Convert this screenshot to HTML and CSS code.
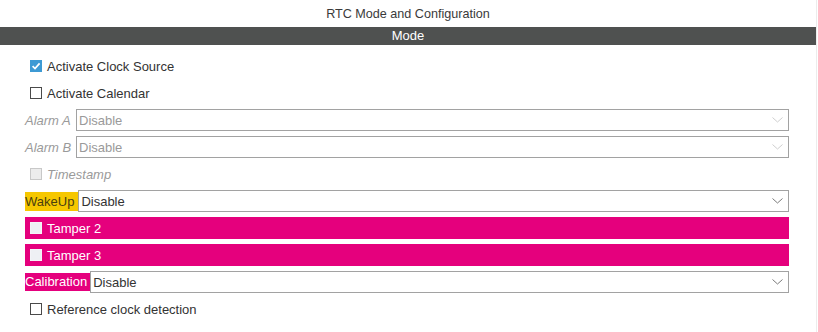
FILE: index.html
```html
<!DOCTYPE html>
<html lang="en">
<head>
    <meta charset="UTF-8">
    <title>RTC Mode and Configuration</title>
    <link rel="stylesheet" href="styles.css">
</head>
<body>
    <div class="panel">
        <div class="panel-title">RTC Mode and Configuration</div>
        <div class="section-bar">Mode</div>

        <div class="form">
            <div class="row">
                <span class="check checked">
                    <svg width="12" height="12" viewBox="0 0 12 12"><path d="M2.6 6.2 L5 8.6 L9.6 3.4" fill="none" stroke="#fff" stroke-width="1.7"/></svg>
                </span>
                <span class="row-text">Activate Clock Source</span>
            </div>

            <div class="row">
                <span class="check"></span>
                <span class="row-text">Activate Calendar</span>
            </div>

            <div class="row">
                <span class="field-label muted">Alarm A</span>
                <div class="select disabled">
                    <span>Disable</span>
                    <svg class="chevron" width="11" height="6" viewBox="0 0 11 6"><path d="M0.5 0.5 L5.5 5 L10.5 0.5" fill="none" stroke="currentColor" stroke-width="1"/></svg>
                </div>
            </div>

            <div class="row">
                <span class="field-label muted">Alarm B</span>
                <div class="select disabled">
                    <span>Disable</span>
                    <svg class="chevron" width="11" height="6" viewBox="0 0 11 6"><path d="M0.5 0.5 L5.5 5 L10.5 0.5" fill="none" stroke="currentColor" stroke-width="1"/></svg>
                </div>
            </div>

            <div class="row">
                <span class="check disabled"></span>
                <span class="row-text muted">Timestamp</span>
            </div>

            <div class="row">
                <span class="field-label warn">WakeUp</span>
                <div class="select">
                    <span>Disable</span>
                    <svg class="chevron" width="11" height="6" viewBox="0 0 11 6"><path d="M0.5 0.5 L5.5 5 L10.5 0.5" fill="none" stroke="currentColor" stroke-width="1"/></svg>
                </div>
            </div>

            <div class="row conflict">
                <span class="check light"></span>
                <span class="row-text">Tamper 2</span>
            </div>

            <div class="row conflict">
                <span class="check light"></span>
                <span class="row-text">Tamper 3</span>
            </div>

            <div class="row">
                <span class="field-label error">Calibration</span>
                <div class="select">
                    <span>Disable</span>
                    <svg class="chevron" width="11" height="6" viewBox="0 0 11 6"><path d="M0.5 0.5 L5.5 5 L10.5 0.5" fill="none" stroke="currentColor" stroke-width="1"/></svg>
                </div>
            </div>

            <div class="row">
                <span class="check"></span>
                <span class="row-text">Reference clock detection</span>
            </div>
        </div>
    </div>
</body>
</html>
```

FILE: styles.css
```css
body {
    margin: 0;
    font-family: "Liberation Sans", Arial, sans-serif;
    font-size: 13px;
    color: #333;
    background-color: white;
}

.panel {
    width: 816px;
    height: 332px;
    border-right: 1px solid #ececec;
}

.panel-title {
    height: 27px;
    line-height: 29px;
    text-align: center;
    font-size: 12.6px;
    color: #3a3a3a;
}

.section-bar {
    height: 18px;
    line-height: 18px;
    background-color: #4f5150;
    color: white;
    text-align: center;
}

.form {
    display: flex;
    flex-direction: column;
    gap: 5px;
    padding: 10px 27px 0 25px;
}

.row {
    display: flex;
    align-items: center;
    height: 22px;
}

.row-text {
    margin-left: 5px;
}

.check {
    width: 12px;
    height: 12px;
    box-sizing: border-box;
    margin-left: 5px;
    border: 1px solid #4a4a4a;
    background-color: white;
    display: flex;
}

.check.checked {
    border: none;
    background-color: #3d9ad4;
}

.check.disabled {
    border-color: #c8c8c8;
    background-color: #ececec;
}

.check.light {
    border-color: #f4f4f8;
    background-color: #eef0f4;
}

.muted {
    color: #9a9a9a;
    font-style: italic;
}

.field-label {
    padding-right: 3px;
    white-space: nowrap;
}

.field-label.muted {
    width: 51px;
    padding-right: 0;
}

.field-label.warn {
    background-color: #f6c700;
    color: #4a3f10;
    height: 19px;
    line-height: 19px;
    padding-right: 4px;
}

.field-label.error {
    background-color: #e5007d;
    color: white;
    height: 18px;
    line-height: 18px;
}

.select {
    flex: 1;
    height: 22px;
    box-sizing: border-box;
    border: 1px solid #a2a2a2;
    background-color: white;
    display: flex;
    align-items: center;
    justify-content: space-between;
    padding: 0 5px 0 2px;
    color: #333;
}

.select.disabled {
    color: #9a9a9a;
}

.chevron {
    color: #7a7a7a;
}

.select.disabled .chevron {
    color: #cfcfcf;
}

.conflict {
    background-color: #e5007d;
    color: white;
}
```
